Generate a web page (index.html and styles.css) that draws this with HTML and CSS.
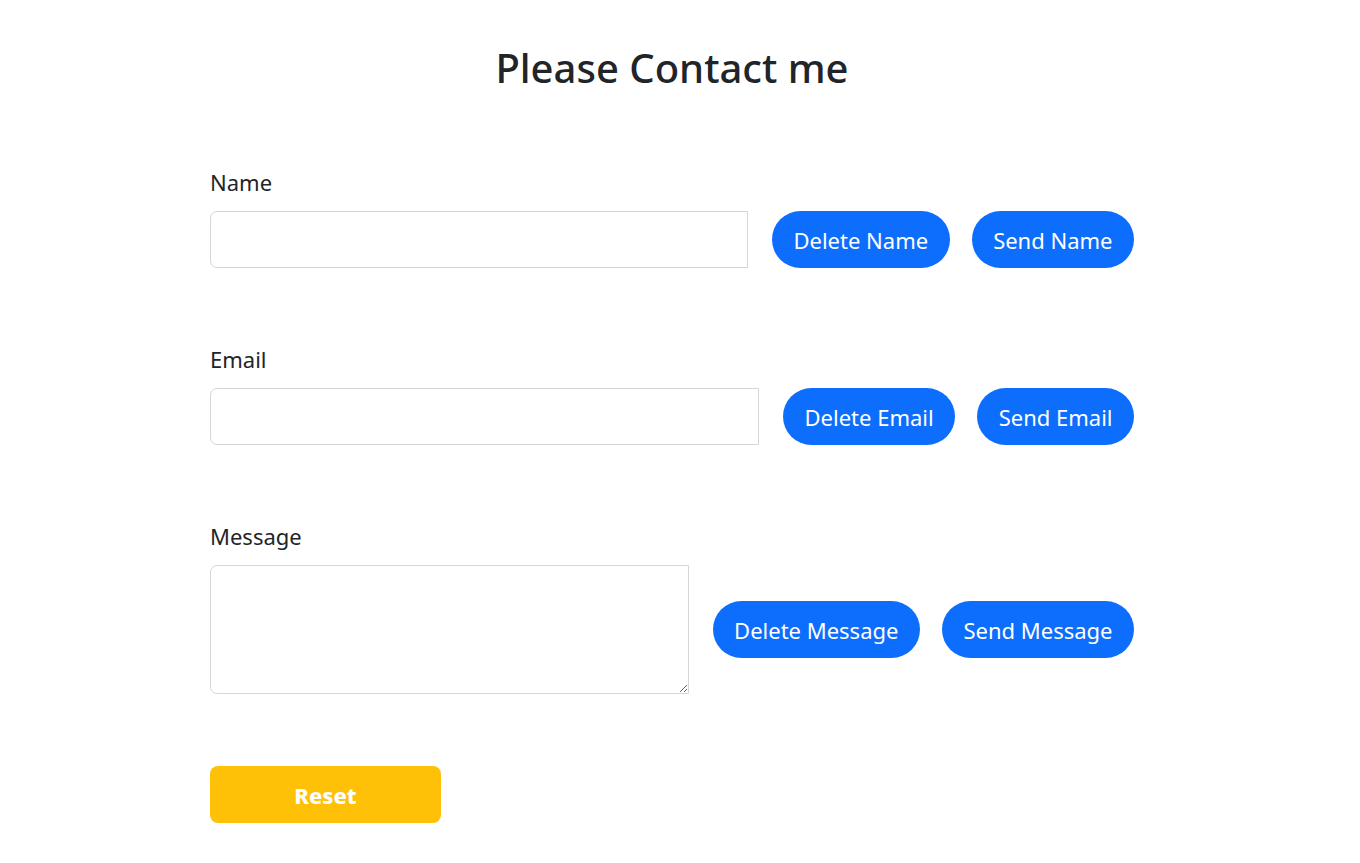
FILE: index.html
```html
<!DOCTYPE html>
<html lang="en">
<head>
<meta charset="utf-8">
<title>Please Contact me</title>
<link rel="stylesheet" href="styles.css">
</head>
<body>
<main class="page">
  <h1 class="title">Please Contact me</h1>
  <form class="contact">
    <div class="group">
      <label class="label" for="name">Name</label>
      <div class="row">
        <input class="field" id="name" type="text">
        <button type="button" class="pill first">Delete Name</button>
        <button type="button" class="pill second">Send Name</button>
      </div>
    </div>
    <div class="group">
      <label class="label" for="email">Email</label>
      <div class="row">
        <input class="field" id="email" type="email">
        <button type="button" class="pill first">Delete Email</button>
        <button type="button" class="pill second">Send Email</button>
      </div>
    </div>
    <div class="group group-last">
      <label class="label" for="message">Message</label>
      <div class="row">
        <textarea class="field area" id="message"></textarea>
        <button type="button" class="pill first">Delete Message</button>
        <button type="button" class="pill second">Send Message</button>
      </div>
    </div>
    <button type="reset" class="reset">Reset</button>
  </form>
</main>
</body>
</html>
```
FILE: styles.css
```css
* { box-sizing: border-box; }
html, body { margin: 0; padding: 0; background: #fff; }
body {
  font-family: "Noto Sans", "Open Sans", sans-serif;
  color: #212529;
}
.page {
  width: 924px;
  margin-left: 210px;
  padding-top: 44px;
}
.title {
  margin: 0;
  text-align: center;
  font-size: 40px;
  font-weight: 500;
  line-height: 1.2;
  height: 56px;
}
.contact { margin-top: 67px; }
.group { margin-bottom: 76px; }
.group-last { margin-bottom: 72px; }
.label {
  display: block;
  font-size: 22px;
  line-height: 30px;
  margin-bottom: 14px;
}
.row {
  display: flex;
  align-items: center;
}
.field {
  flex: 1;
  min-width: 0;
  height: 57px;
  border: 1px solid #d3d6da;
  border-radius: 7px 0 0 7px;
  font: inherit;
  font-size: 22px;
  padding: 6px 12px;
  background: #fff;
}
.area { height: 129px; resize: vertical; }
.pill {
  height: 57px;
  padding: 0 21.5px;
  border: none;
  border-radius: 29px;
  background: #0d6efd;
  color: #fff;
  font: inherit;
  font-size: 22px;
  white-space: nowrap;
  cursor: pointer;
}
.first { margin-left: 24px; }
.second { margin-left: 22px; }
.reset {
  display: block;
  width: 231px;
  height: 57px;
  border: none;
  border-radius: 8px;
  background: #ffc107;
  color: #fff;
  font: inherit;
  font-size: 22px;
  font-weight: 800;
  cursor: pointer;
}
```
